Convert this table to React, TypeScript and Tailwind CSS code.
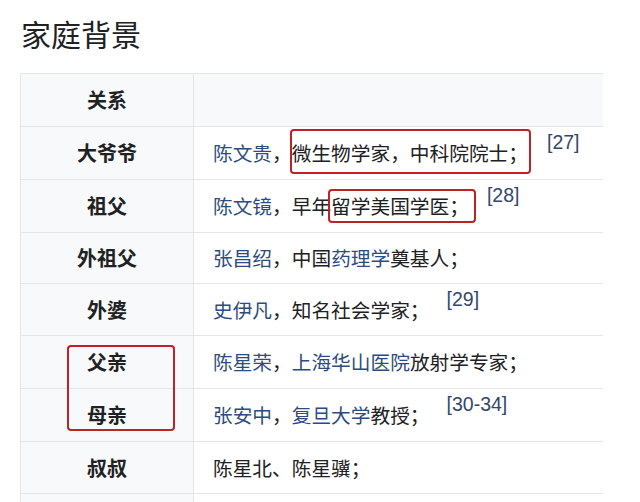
type Part = { text: string; link?: boolean };

type Row = {
  relation: string;
  parts: Part[];
  note?: string;
  noteGap?: string;
  height: string;
};

const ROWS: Row[] = [
  {
    relation: "大爷爷",
    parts: [
      { text: "陈文贵", link: true },
      { text: "，微生物学家，中科院院士；" },
    ],
    note: "[27]",
    noteGap: "ml-[19px]",
    height: "h-[53px]",
  },
  {
    relation: "祖父",
    parts: [
      { text: "陈文镜", link: true },
      { text: "，早年留学美国学医；" },
    ],
    note: "[28]",
    noteGap: "ml-[18px]",
    height: "h-[53px]",
  },
  {
    relation: "外祖父",
    parts: [
      { text: "张昌绍", link: true },
      { text: "，中国" },
      { text: "药理学", link: true },
      { text: "奠基人；" },
    ],
    height: "h-[51px]",
  },
  {
    relation: "外婆",
    parts: [
      { text: "史伊凡", link: true },
      { text: "，知名社会学家；" },
    ],
    note: "[29]",
    noteGap: "ml-[17px]",
    height: "h-[52px]",
  },
  {
    relation: "父亲",
    parts: [
      { text: "陈星荣", link: true },
      { text: "，" },
      { text: "上海华山医院", link: true },
      { text: "放射学专家；" },
    ],
    height: "h-[53px]",
  },
  {
    relation: "母亲",
    parts: [
      { text: "张安中", link: true },
      { text: "，" },
      { text: "复旦大学", link: true },
      { text: "教授；" },
    ],
    note: "[30-34]",
    noteGap: "ml-[17px]",
    height: "h-[53px]",
  },
  {
    relation: "叔叔",
    parts: [{ text: "陈星北、陈星骥；" }],
    height: "h-[52px]",
  },
];

const CJK = "font-['Noto_Sans_CJK_SC',sans-serif]";

function Note({ label, gap }: { label: string; gap?: string }) {
  return (
    <span
      className={`${gap} relative -top-[10px] font-['Liberation_Sans',sans-serif] text-[19.5px] text-[#34476a]`}
    >
      {label}
    </span>
  );
}

export default function App() {
  return (
    <div className={`relative w-[640px] h-[502px] overflow-hidden bg-white ${CJK} text-[#202122]`}>
      <h1 className="pl-[21px] pt-[15px] text-[30px] leading-[36px] font-normal">家庭背景</h1>

      <div className="mt-[22px] ml-[20px] w-[583px] border-l border-[#e3e5e8]">
        <div className="flex h-[53px] border-t border-[#e3e5e8] bg-[#f8f9fa]">
          <div className="w-[173px] flex items-center justify-center border-r border-[#e3e5e8] text-[20px] font-bold">
            关系
          </div>
          <div className="flex-1" />
        </div>

        {ROWS.map((row) => (
          <div key={row.relation} className={`flex ${row.height} border-t border-[#e3e5e8]`}>
            <div className="w-[173px] flex items-center justify-center bg-[#f8f9fa] border-r border-[#e3e5e8] text-[20px] font-bold">
              {row.relation}
            </div>
            <div className="flex-1 flex items-center pl-[19px] text-[19.7px] whitespace-nowrap">
              {row.parts.map((p, i) => (
                <span key={i} className={p.link ? "text-[#2c4c80]" : ""}>
                  {p.text}
                </span>
              ))}
              {row.note && <Note label={row.note} gap={row.noteGap} />}
            </div>
          </div>
        ))}

        <div className="flex h-[53px] border-t border-[#e3e5e8]">
          <div className="w-[173px] bg-[#f8f9fa] border-r border-[#e3e5e8]" />
          <div className="flex-1" />
        </div>
      </div>

      {/* red annotation boxes */}
      <div className="absolute left-[290px] top-[129px] w-[241px] h-[45px] border-[2.5px] border-[#bb2329] rounded-[4px]" />
      <div className="absolute left-[328px] top-[189px] w-[148px] h-[34px] border-[2.5px] border-[#bb2329] rounded-[4px]" />
      <div className="absolute left-[67px] top-[345px] w-[108px] h-[86px] border-[2.5px] border-[#bb2329] rounded-[4px]" />
    </div>
  );
}
